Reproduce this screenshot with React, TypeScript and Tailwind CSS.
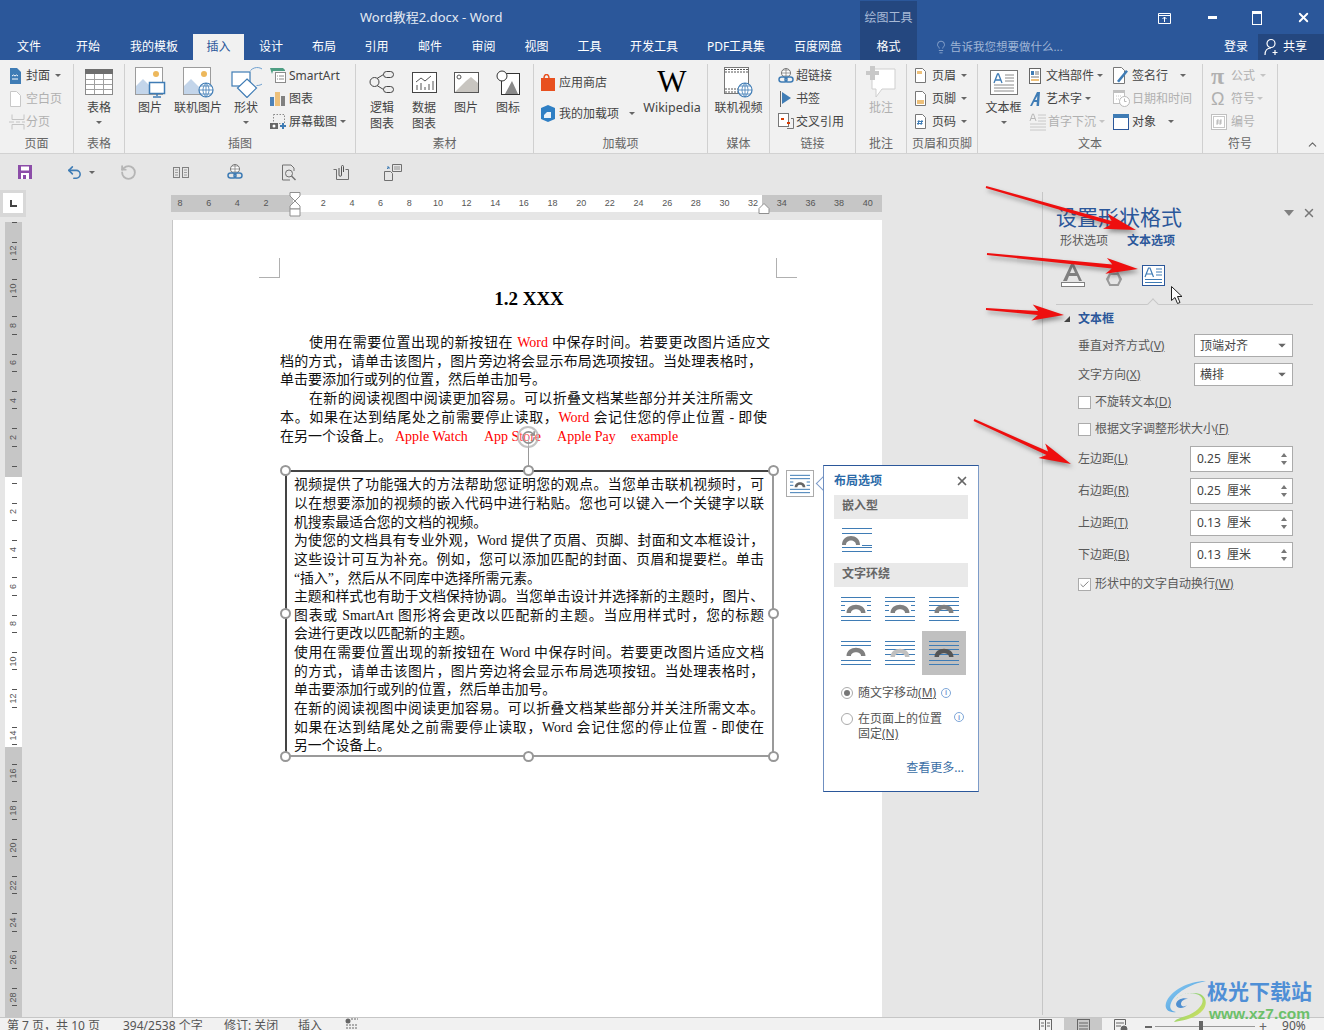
import { ReactNode } from 'react'
import { Lightbulb, RotateCw, Undo2, X, ChevronUp, Check } from 'lucide-react'

const Caret = ({ light = false }: { light?: boolean }) => (
  <span className={`inline-block h-0 w-0 border-x-[3px] border-t-[3px] border-x-transparent ${light ? 'border-t-[#c4c4c4]' : 'border-t-[#666666]'}`} />
)

// ribbon icons
const Ico = ({ w = 16, h = 16, children }: { w?: number; h?: number; children: ReactNode }) => (
  <svg width={w} height={h} viewBox={`0 0 ${w} ${h}`} fill="none" className="shrink-0">{children}</svg>
)
const CoverIcon = () => <Ico w={12} h={16}><path d="M1 0h7l4 4v12H1z" fill="#3f7cb5" /><path d="M3 8l1.5-1 1.5 1 1.5-1L9 8M3 11h6" stroke="#fff" /></Ico>
const BlankIcon = () => <Ico w={12} h={16}><path d="M1.5.5h6l4 4v11h-10z" fill="#fff" stroke="#c8c8c8" /></Ico>
const BreakIcon = () => <Ico w={16} h={16}><path d="M3 .5v5h12v-5M3 15.5v-5h12v5M0 8h5M7 8h4M13 8h3" stroke="#c4c4c4" /></Ico>
const TableIcon = () => <Ico w={28} h={26}><rect x=".5" y=".5" width="27" height="25" fill="#fff" stroke="#8a8a8a" /><rect width="28" height="5" fill="#6e6e6e" /><path d="M1 10.5h26M1 15.5h26M1 20.5h26M9.5 5v20M18.5 5v20" stroke="#a0a0a0" /></Ico>
const PicBase = () => <g><rect x=".5" y=".5" width="27" height="27" fill="#fff" stroke="#9c9c9c" /><circle cx="21" cy="7" r="3" fill="#edb85c" /><path d="M1 27V19l7-7 9 9 3 6z" fill="#c3d5ea" /></g>
const PictureIcon = () => <Ico w={31} h={31}><PicBase /><rect x="14.5" y="15.5" width="15" height="11" fill="#fff" stroke="#3f7cb5" strokeWidth="1.5" /><path d="M22 27v2M18 30h8" stroke="#3f7cb5" strokeWidth="1.5" /></Ico>
const OnlinePicIcon = () => <Ico w={31} h={31}><PicBase /><circle cx="23" cy="23" r="7" fill="#fff" stroke="#3f7cb5" strokeWidth="1.2" /><path d="M16 23h14M23 16v14M18 19h10M18 27h10M23 16c-4 4-4 10 0 14M23 16c4 4 4 10 0 14" stroke="#3f7cb5" strokeWidth=".8" /></Ico>
const ShapesIcon = () => <Ico w={31} h={31}><path d="M19.5 3.5a9 9 0 1 1 6 15" stroke="#6fa0cf" /><rect x="1" y="5" width="18" height="14" fill="#fff" stroke="#3f7cb5" strokeWidth="1.2" /><path d="M16 12l9.5 9-9.5 9.5L6.5 21z" fill="#fff" stroke="#3f7cb5" strokeWidth="1.2" /></Ico>
const SmartArtIcon = () => <Ico w={16} h={16}><path d="M0 0h13l2 2v1H3l-1 3z" fill="#4e9e83" /><rect x="5.5" y="4.5" width="10" height="10" fill="#fff" stroke="#8a8a8a" /><path d="M7 8h1M9 8h5M7 11h1M9 11h5" stroke="#8a8a8a" /></Ico>
const BarsIcon = () => <Ico w={15} h={15}><rect y="6" width="4" height="9" fill="#4d82b8" /><rect x="5" y="1" width="5" height="14" fill="#edc07a" /><rect x="11" y="5" width="4" height="10" fill="#808080" /></Ico>
const ShotIcon = () => <Ico w={17} h={16}><rect x="3.5" y=".5" width="11" height="9" stroke="#8a8a8a" strokeDasharray="1.5 1.5" /><rect y="9" width="8" height="6" fill="#666" /><circle cx="4" cy="12" r="1.5" fill="#fff" /><path d="M13 9v6M10 12h6" stroke="#3f7cb5" strokeWidth="2" /></Ico>
const LogicIcon = () => <Ico w={26} h={26}><circle cx="5.5" cy="13" r="4.5" stroke="#444" /><rect x="14.5" y="2.5" width="10" height="6" rx="3" stroke="#444" fill="#eee" /><rect x="14.5" y="17.5" width="10" height="6" rx="3" stroke="#444" fill="#eee" /><path d="M8 9.5L14.5 5.5M8 16.5l6.5 4" stroke="#444" /></Ico>
const DataIcon = () => <Ico w={25} h={21}><rect x=".5" y=".5" width="24" height="20" fill="#fff" stroke="#444" /><path d="M5 18v-5M9 18v-7M13 18v-3M17 18v-6M21 18V9M4 10l5-4 4 3 6-5" stroke="#555" /></Ico>
const Pic2Icon = () => <Ico w={25} h={21}><rect x=".5" y=".5" width="24" height="20" fill="#fff" stroke="#555" /><path d="M1 20l11-11 5-4 7 6v9z" fill="#c8c5c0" /><circle cx="5" cy="5" r="2" fill="#fff" stroke="#555" /></Ico>
const GlyphIcon = () => <Ico w={24} h={25}><rect x="5.5" y="3.5" width="18" height="21" fill="#fff" stroke="#333" /><circle cx="6" cy="6" r="5" fill="#fff" stroke="#333" /><path d="M9 24l7-13 6 13z" fill="#8a8a8a" /></Ico>
const StoreIcon = () => <Ico w={14} h={17}><path d="M0 4h14v13H0z" fill="#e8501f" /><path d="M3 5c0-6 5-6 5 0" stroke="#e8501f" strokeWidth="1.5" /></Ico>
const AddinIcon = () => <Ico w={14} h={17}><path d="M7 0l7 3v11l-7 3-7-3V3z" fill="#2f7fc4" /><path d="M6 7h4v6H3v-3z" fill="#fff" opacity=".9" /></Ico>
const VideoIcon = () => <Ico w={30} h={31}><rect x=".5" y=".5" width="24" height="26" fill="#fff" stroke="#777" /><path d="M1 2.5h23M1 5h23M1 22h23M1 25h23" stroke="#555" strokeDasharray="2 1" /><circle cx="21" cy="23" r="7" fill="#fff" stroke="#3f7cb5" strokeWidth="1.2" /><path d="M14 23h14M21 16v14M21 16c-4 4-4 10 0 14M21 16c4 4 4 10 0 14M16 19h10M16 27h10" stroke="#3f7cb5" strokeWidth=".8" /></Ico>
const LinkIcon = ({ s = 16 }: { s?: number }) => <svg width={s} height={s} viewBox="0 0 16 16" fill="none" className="shrink-0"><circle cx="8" cy="5" r="4.5" fill="#fff" stroke="#777" /><path d="M3.5 5h9M8 .5v9M5 2h6M5 8h6" stroke="#777" strokeWidth=".7" /><rect x="1" y="9" width="8" height="5" rx="2.5" fill="none" stroke="#3f7cb5" strokeWidth="1.5" /><rect x="7" y="9" width="8" height="5" rx="2.5" fill="none" stroke="#3f7cb5" strokeWidth="1.5" /></svg>
const FlagIcon = () => <Ico w={14} h={16}><path d="M2.5 0v16" stroke="#666" /><path d="M4 1l9 6-9 6z" fill="#3f7cb5" /></Ico>
const CrossIcon = () => <Ico w={16} h={17}><rect x=".5" y=".5" width="10" height="13" fill="#fff" stroke="#777" /><path d="M9 15.5h6.5v-10H13" stroke="#777" /><rect x="9" y="9" width="3" height="2" fill="#d83b01" /><rect x="3" y="5" width="3" height="2" fill="#d83b01" /></Ico>
const CommentIcon = () => <Ico w={30} h={36}><path d="M6 5h23v20H16l-6 8v-8H6z" fill="#fff" stroke="#cfcfcf" /><path d="M4 2h5v5h4v4H9v5H4v-5H0V7h4z" fill="#c9c9c9" /></Ico>
const PageDoc = ({ kind }: { kind: 'top' | 'bottom' | 'num' }) => (
  <Ico w={11} h={15}>
    <path d="M.5.5h7l3 3v11H.5z" fill="#fff" stroke="#777" />
    {kind === 'top' && <rect x="2" y="3" width="5" height="3" fill="#edc07a" />}
    {kind === 'bottom' && <rect x="2" y="9" width="7" height="4" fill="#edc07a" />}
    {kind === 'num' && <path d="M4 6l-1 5M7 6l-1 5M2.5 7.5h5.5M2 9.5h5.5" stroke="#3f7cb5" />}
  </Ico>
)
const TextBoxIcon = () => <Ico w={28} h={25}><rect x=".5" y=".5" width="27" height="24" fill="#fff" stroke="#777" /><path d="M15 5h9M15 8h9M15 11h9M4 15h20M4 18h20M4 21h20" stroke="#8a8a8a" /><path d="M4 13L7.5 4h1L12 13M5.5 10h5" stroke="#3f7cb5" strokeWidth="1.3" /></Ico>
const PartsIcon = () => <Ico w={12} h={16}><rect x=".5" y=".5" width="11" height="15" fill="#fff" stroke="#666" /><rect x="2" y="3" width="3" height="4" fill="#3f7cb5" /><path d="M6 4h4M6 6h4M2 9h8" stroke="#777" /><rect x="2" y="11" width="8" height="2" fill="#edc07a" /></Ico>
const WordArtIcon = () => <Ico w={12} h={16}><path d="M1 15L8 1h3l-1 14H7.5l.3-4H5l-2 4zM6 9h2l.3-4z" fill="#3f7cb5" /></Ico>
const DropCapIcon = () => <Ico w={18} h={18}><path d="M1 8l2.5-7h1L7 8M2 5.5h4" stroke="#b8b8b8" /><path d="M9 2h8M9 5h8M9 8h8M1 11h16M1 14h16M1 17h16" stroke="#c8c8c8" /></Ico>
const SignIcon = () => <Ico w={16} h={17}><path d="M.5.5h8l3 3v13H.5z" fill="#fff" stroke="#777" /><path d="M4 14l9-11 2 1.5L6 15.5z" fill="#3f7cb5" /></Ico>
const DateIcon = () => <Ico w={17} h={17}><rect x=".5" y=".5" width="11" height="13" fill="#fff" stroke="#c0c0c0" /><rect width="12" height="3" fill="#c0c0c0" /><path d="M3 6h6M3 9h6" stroke="#c8c8c8" strokeDasharray="1 1" /><circle cx="11.5" cy="11.5" r="5" fill="#fff" stroke="#b8b8b8" /><path d="M11.5 8.5v3h2" stroke="#b8b8b8" /></Ico>
const ObjectIcon = () => <Ico w={16} h={16}><rect x=".5" y=".5" width="15" height="15" fill="#fff" stroke="#2b579a" /><rect width="16" height="4" fill="#3f7cb5" /></Ico>
const NumIcon = () => <Ico w={16} h={16}><rect x=".5" y=".5" width="15" height="15" fill="#fff" stroke="#c0c0c0" /><rect x="2.5" y="2.5" width="11" height="11" stroke="#c8c8c8" /><path d="M7 5l-1 6M10 5l-1 6M5 7h6M5 9h6" stroke="#b0b0b0" strokeWidth=".8" /></Ico>

const SmallBtn = ({ icon, label, caret, off, gapLeft = 'w-[17px]', caretGap = 'ml-[5px]' }: { icon: ReactNode; label: string; caret?: boolean; off?: boolean; gapLeft?: string; caretGap?: string }) => (
  <div className={`flex h-[23px] items-center whitespace-nowrap text-[12px] ${off ? 'text-[#b0b0b0]' : 'text-[#444444]'}`}>
    <span className={`${gapLeft} flex items-center`}>{icon}</span>
    <span>{label}</span>
    {caret && <span className={`${caretGap} flex`}><Caret light={off} /></span>}
  </div>
)

const BigBtn = ({ icon, lines, caret, w, off }: { icon: ReactNode; lines: string[]; caret?: boolean; w: string; off?: boolean }) => (
  <div className={`flex flex-col items-center whitespace-nowrap text-[12px] leading-[16px] ${w} ${off ? 'text-[#b0b0b0]' : 'text-[#444444]'}`}>
    <div className="flex h-[36px] items-center justify-center">{icon}</div>
    {lines.map((l) => <div key={l}>{l}</div>)}
    {caret && <div className="mt-[5px] flex"><Caret /></div>}
  </div>
)

const Group = ({ label, w, pad = '', children }: { label: string; w: string; pad?: string; children: ReactNode }) => (
  <div className={`flex ${w} shrink-0 flex-col border-r border-[#d0d0d0]`}>
    <div className={`flex h-[72px] ${pad}`}>{children}</div>
    <div className="text-center text-[12px] leading-[16px] text-[#666666]">{label}</div>
  </div>
)

const TABS: [string, string][] = [
  ['文件', 'w-[58px]'], ['开始', 'w-[60px]'], ['我的模板', 'w-[72px]'],
]
const TABS2: [string, string][] = [
  ['设计', 'w-[54px]'], ['布局', 'w-[52px]'], ['引用', 'w-[53px]'], ['邮件', 'w-[54px]'], ['审阅', 'w-[53px]'],
  ['视图', 'w-[53px]'], ['工具', 'w-[53px]'], ['开发工具', 'w-[76px]'], ['PDF工具集', 'w-[88px]'], ['百度网盘', 'w-[76px]'],
]

function TopBar() {
  return (
    <div className="h-[60px] shrink-0 bg-[#2b579a] text-white">
      <div className="flex h-[34px]">
        <div className="w-[860px] pl-[360px] pt-[8px] text-[13px] leading-[18px] text-[#e4eaf3]">Word教程2.docx - Word</div>
        <div className="mt-px w-[57px] bg-[#24477f] pt-[8px] text-center text-[12px] leading-[18px] text-[#a7b9d6]">绘图工具</div>
        <div className="flex flex-1 items-center pl-[241px] pt-[1px]">
          <svg width="14" height="14" viewBox="0 0 14 14" fill="none" stroke="#fff"><path d="M.5 2.5h12v10H.5zM.5 4.5h12" /><path d="M6.5 11V6M4.5 8l2-2 2 2" /></svg>
          <div className="ml-[36px] h-[3px] w-[9px] bg-white" />
          <div className="ml-[35px] h-[14px] w-[10px] border border-t-[3px] border-white" />
          <X size={15} strokeWidth={3} className="ml-[34px]" />
        </div>
      </div>
      <div className="flex h-[26px] text-[12px] leading-[26px]">
        {TABS.map(([t, w]) => <div key={t} className={`${w} text-center`}>{t}</div>)}
        <div className="ml-[3px] w-[51px] bg-[#f1f1f1] text-center text-[#2b579a]">插入</div>
        {TABS2.map(([t, w]) => <div key={t} className={`${w} text-center`}>{t}</div>)}
        <div className="ml-[4px] w-[57px] bg-[#24477f] text-center">格式</div>
        <div className="ml-[17px] flex items-center text-[#9fb5d6]">
          <Lightbulb size={14} strokeWidth={1.3} />
          <span className="ml-[2px] text-[11.5px]">告诉我您想要做什么...</span>
        </div>
        <div className="ml-auto mr-[10px]">登录</div>
        <div className="flex w-[66px] items-center bg-[#24477f] pl-[6px]">
          <svg width="16" height="18" viewBox="0 0 16 18" fill="none" stroke="#fff" strokeWidth="1.2"><circle cx="7" cy="5.5" r="4" /><path d="M1 17c0-5 3-7 6-7M11 12v5M8.5 14.5h5" /></svg>
          <span className="ml-[3px]">共享</span>
        </div>
      </div>
    </div>
  )
}

function Ribbon() {
  return (
    <div className="relative flex h-[94px] shrink-0 border-b border-[#d2d2d2] bg-[#f1f1f1] pt-[4px]">
      <Group label="页面" w="w-[74px]" pad="flex-col pl-[9px]">
        <SmallBtn icon={<CoverIcon />} label="封面" caret />
        <SmallBtn icon={<BlankIcon />} label="空白页" off />
        <SmallBtn icon={<BreakIcon />} label="分页" off />
      </Group>
      <Group label="表格" w="w-[51px]" pad="justify-center">
        <BigBtn icon={<TableIcon />} lines={['表格']} caret w="w-[50px]" />
      </Group>
      <Group label="插图" w="w-[231px]" pad="pl-[1px]">
        <BigBtn icon={<PictureIcon />} lines={['图片']} w="w-[48px]" />
        <BigBtn icon={<OnlinePicIcon />} lines={['联机图片']} w="w-[48px]" />
        <BigBtn icon={<ShapesIcon />} lines={['形状']} caret w="w-[48px]" />
        <div className="flex flex-col">
          <SmallBtn icon={<SmartArtIcon />} label="SmartArt" gapLeft="w-[19px]" />
          <SmallBtn icon={<BarsIcon />} label="图表" gapLeft="w-[19px]" />
          <SmallBtn icon={<ShotIcon />} label="屏幕截图" caret gapLeft="w-[19px]" caretGap="ml-[3px]" />
        </div>
      </Group>
      <Group label="素材" w="w-[178px]" pad="pl-[5px]">
        <BigBtn icon={<LogicIcon />} lines={['逻辑', '图表']} w="w-[42px]" />
        <BigBtn icon={<DataIcon />} lines={['数据', '图表']} w="w-[42px]" />
        <BigBtn icon={<Pic2Icon />} lines={['图片']} w="w-[42px]" />
        <BigBtn icon={<GlyphIcon />} lines={['图标']} w="w-[42px]" />
      </Group>
      <Group label="加载项" w="w-[174px]" pad="pl-[7px]">
        <div className="flex w-[101px] flex-col pt-[3px]">
          <div className="flex h-[31px] items-center text-[12px] text-[#444444]"><span className="w-[18px]"><StoreIcon /></span>应用商店</div>
          <div className="flex h-[31px] items-center text-[12px] text-[#444444]"><span className="w-[18px]"><AddinIcon /></span>我的加载项<span className="ml-[10px] flex"><Caret /></span></div>
        </div>
        <div className="flex w-[60px] flex-col items-center text-[12.5px] leading-[16px] text-[#444444]">
          <div className="flex h-[36px] items-center font-['Liberation_Serif',serif] text-[31px] text-black">W</div>
          <div>Wikipedia</div>
        </div>
      </Group>
      <Group label="媒体" w="w-[62px]" pad="justify-center">
        <BigBtn icon={<VideoIcon />} lines={['联机视频']} w="w-[60px]" />
      </Group>
      <Group label="链接" w="w-[86px]" pad="flex-col pl-[8px]">
        <SmallBtn icon={<LinkIcon />} label="超链接" gapLeft="w-[18px]" />
        <SmallBtn icon={<FlagIcon />} label="书签" gapLeft="w-[18px]" />
        <SmallBtn icon={<CrossIcon />} label="交叉引用" gapLeft="w-[18px]" />
      </Group>
      <Group label="批注" w="w-[51px]" pad="justify-center">
        <BigBtn icon={<CommentIcon />} lines={['批注']} w="w-[50px]" off />
      </Group>
      <Group label="页眉和页脚" w="w-[71px]" pad="flex-col pl-[8px]">
        <SmallBtn icon={<PageDoc kind="top" />} label="页眉" caret />
        <SmallBtn icon={<PageDoc kind="bottom" />} label="页脚" caret />
        <SmallBtn icon={<PageDoc kind="num" />} label="页码" caret />
      </Group>
      <Group label="文本" w="w-[225px]" pad="pl-[6px]">
        <BigBtn icon={<TextBoxIcon />} lines={['文本框']} caret w="w-[39px]" />
        <div className="ml-[6px] flex w-[84px] flex-col">
          <SmallBtn icon={<PartsIcon />} label="文档部件" caret gapLeft="w-[17px]" caretGap="ml-[3px]" />
          <SmallBtn icon={<WordArtIcon />} label="艺术字" caret gapLeft="w-[17px]" caretGap="ml-[3px]" />
          <SmallBtn icon={<DropCapIcon />} label="首字下沉" caret off gapLeft="w-[19px]" caretGap="ml-[3px]" />
        </div>
        <div className="flex flex-col">
          <SmallBtn icon={<SignIcon />} label="签名行" caret gapLeft="w-[19px]" caretGap="ml-[12px]" />
          <SmallBtn icon={<DateIcon />} label="日期和时间" off gapLeft="w-[19px]" />
          <SmallBtn icon={<ObjectIcon />} label="对象" caret gapLeft="w-[19px]" caretGap="ml-[12px]" />
        </div>
      </Group>
      <Group label="符号" w="w-[75px]" pad="flex-col pl-[8px]">
        <SmallBtn icon={<span className="font-['Liberation_Serif',serif] text-[24px] font-bold leading-[20px] text-[#b0b0b0]">π</span>} label="公式" caret off gapLeft="w-[20px]" />
        <SmallBtn icon={<span className="font-['Liberation_Sans',sans-serif] text-[18px] leading-[20px] text-[#b0b0b0]">Ω</span>} label="符号" caret off gapLeft="w-[20px]" caretGap="ml-[2px]" />
        <SmallBtn icon={<NumIcon />} label="编号" off gapLeft="w-[20px]" />
      </Group>
      <ChevronUp size={13} strokeWidth={2} className="absolute bottom-[2px] right-[5px] text-[#666666]" />
    </div>
  )
}

function QuickBar() {
  return (
    <div className="flex h-[36px] shrink-0 items-center pl-[18px]">
      <svg width="14" height="14" viewBox="0 0 14 14"><path d="M0 0h14v14H0z" fill="#8c4da8" /><rect x="3" y="1.5" width="8" height="4" fill="#fff" /><rect x="3" y="8" width="8" height="6" fill="#fff" /><rect x="5" y="10" width="3" height="4" fill="#8c4da8" /></svg>
      <Undo2 size={17} strokeWidth={2.2} className="ml-[34px] text-[#3f7cb5]" />
      <span className="ml-[6px] flex"><Caret /></span>
      <RotateCw size={17} strokeWidth={2.6} className="ml-[25px] -scale-x-100 text-[#b5b5b5]" />
      <svg width="16" height="11" viewBox="0 0 16 11" fill="none" stroke="#808080" className="ml-[36px]"><rect x=".5" y=".5" width="6" height="10" /><rect x="9.5" y=".5" width="6" height="10" /><path d="M2 3h3M2 5.5h3M2 8h3M11 3h3M11 5.5h3M11 8h3" strokeWidth=".7" /></svg>
      <span className="ml-[38px]"><LinkIcon s={16} /></span>
      <svg width="16" height="17" viewBox="0 0 16 17" fill="none" stroke="#707070" className="ml-[38px]"><path d="M10 1H1.5v15H9M10 1l3 3v3" /><circle cx="8" cy="9.5" r="3.5" /><path d="M10.5 12l4 4" strokeWidth="1.5" /></svg>
      <svg width="16" height="15" viewBox="0 0 16 15" fill="none" stroke="#707070" className="ml-[36px]"><path d="M.5 4.5h3v10h12v-10h-3" /><path d="M6 3v7a1.2 1.2 0 0 0 2.5 0V1.5a1 1 0 0 1 2 0V7" stroke="#555" /></svg>
      <svg width="18" height="17" viewBox="0 0 18 17" fill="none" stroke="#707070" className="ml-[35px]"><path d="M8.5.5h9v7h-9zM.5 7.5h6l2 2v7h-8z" /><path d="M10 3h6M10 5h6" strokeWidth=".7" /><path d="M3 5l2-2M5 5V3H3" stroke="#3f7cb5" /></svg>
    </div>
  )
}

const H_LABELS = ['8', '6', '4', '2', '', '2', '4', '6', '8', '10', '12', '14', '16', '18', '20', '22', '24', '26', '28', '30', '32', '34', '36', '38', '40']
const V_LABELS = ['', '12', '10', '8', '6', '4', '2', '', '2', '4', '6', '8', '10', '12', '14', '16', '18', '20', '22', '24', '26', '28', '']

function HRuler() {
  return (
    <div className="relative h-[17px] w-[711px] bg-[linear-gradient(to_right,#c6c6c6_122px,#ffffff_122px,#ffffff_591px,#c6c6c6_591px)]">
      <div className="flex h-full w-[711px] overflow-hidden">
        <div className="flex -ml-[5.33px]">
          {H_LABELS.map((n, i) => (
            <div key={i} className="flex w-[28.67px] shrink-0 items-center justify-center font-['Liberation_Sans',sans-serif] text-[9px] text-[#555555]">{n}</div>
          ))}
        </div>
      </div>
      <svg width="14" height="26" viewBox="0 0 14 26" fill="#fff" stroke="#8f8f8f" className="absolute -top-[3px] left-[117px]"><path d="M2 .5h10V4L7 9 2 4z" /><path d="M7 9l5 5v3H2v-3z" /><path d="M2 17h10v7H2z" /></svg>
      <svg width="12" height="11" viewBox="0 0 12 11" fill="#fff" stroke="#8f8f8f" className="absolute left-[587px] top-[8px]"><path d="M1 10.5v-5l5-5 5 5v5z" /></svg>
    </div>
  )
}

function VRuler() {
  return (
    <div className="ml-[5px] mt-[5px] w-[17px] flex-1 overflow-hidden bg-[linear-gradient(to_bottom,#c6c6c6_255px,#ffffff_255px,#ffffff_525px,#c6c6c6_525px)]">
      <div className="-mt-[27.3px]">
        {V_LABELS.map((n, i) => (
          <div key={i} className="relative flex h-[37.33px] items-center justify-center">
            <div className="absolute left-[7px] top-[9.5px] h-px w-[5px] bg-[#555555]" />
            <div className="absolute bottom-[9.5px] left-[7px] h-px w-[5px] bg-[#555555]" />
            <span className="-rotate-90 font-['Liberation_Sans',sans-serif] text-[9px] leading-none text-[#555555]">{n}</span>
          </div>
        ))}
      </div>
    </div>
  )
}

const Red = ({ children, m = '' }: { children: ReactNode; m?: string }) => <span className={`text-[#ff0000] ${m}`}>{children}</span>
const JUST = 'whitespace-nowrap [text-align:justify] [text-align-last:justify]'

const BOX_LINES: [string, boolean][] = [
  ['视频提供了功能强大的方法帮助您证明您的观点。当您单击联机视频时，可', true],
  ['以在想要添加的视频的嵌入代码中进行粘贴。您也可以键入一个关键字以联', true],
  ['机搜索最适合您的文档的视频。', false],
  ['为使您的文档具有专业外观，Word 提供了页眉、页脚、封面和文本框设计，', true],
  ['这些设计可互为补充。例如，您可以添加匹配的封面、页眉和提要栏。单击', true],
  ['“插入”，然后从不同库中选择所需元素。', false],
  ['主题和样式也有助于文档保持协调。当您单击设计并选择新的主题时，图片、', true],
  ['图表或 SmartArt 图形将会更改以匹配新的主题。当应用样式时，您的标题', true],
  ['会进行更改以匹配新的主题。', false],
  ['使用在需要位置出现的新按钮在 Word 中保存时间。若要更改图片适应文档', true],
  ['的方式，请单击该图片，图片旁边将会显示布局选项按钮。当处理表格时，', true],
  ['单击要添加行或列的位置，然后单击加号。', false],
  ['在新的阅读视图中阅读更加容易。可以折叠文档某些部分并关注所需文本。', true],
  ['如果在达到结尾处之前需要停止读取，Word 会记住您的停止位置 - 即使在', true],
  ['另一个设备上。', false],
]

const Handle = ({ pos }: { pos: string }) => (
  <div className={`absolute h-[11px] w-[11px] rounded-full border-2 border-[#979797] bg-white ${pos}`} />
)

function Page() {
  return (
    <div className="relative ml-[1px] mt-[8px] flex-1 overflow-hidden border-l border-[#c6c6c6] bg-white pl-[107px] font-['Liberation_Serif','Noto_Sans_CJK_SC',serif] text-[14px] leading-[18.7px] text-[#111111]">
      <div className="absolute left-[86px] top-[38px] h-[20px] w-[21px] border-b border-r border-[#b0b0b0]" />
      <div className="absolute left-[603px] top-[38px] h-[20px] w-[21px] border-b border-l border-[#b0b0b0]" />
      <div className="mt-[68px] w-[498px] text-center text-[19px] font-bold leading-[22px] text-black">1.2 XXX</div>
      <div className="mt-[24px]">
        <div className={`ml-[29px] w-[461px] ${JUST}`}>使用在需要位置出现的新按钮在 <Red>Word</Red> 中保存时间。若要更改图片适应文</div>
        <div className={`w-[482px] ${JUST}`}>档的方式，请单击该图片，图片旁边将会显示布局选项按钮。当处理表格时，</div>
        <div>单击要添加行或列的位置，然后单击加号。</div>
        <div className={`ml-[29px] w-[444px] ${JUST}`}>在新的阅读视图中阅读更加容易。可以折叠文档某些部分并关注所需文</div>
        <div className={`w-[487px] ${JUST}`}>本。如果在达到结尾处之前需要停止读取，<Red>Word</Red> 会记住您的停止位置 - 即使</div>
        <div className="whitespace-nowrap">在另一个设备上。<Red m="ml-[3px]">Apple Watch</Red><Red m="ml-[16px]">App Store</Red><Red m="ml-[16px]">Apple Pay</Red><Red m="ml-[15px]">example</Red></div>
      </div>
      <div className="relative ml-[5px] mt-[24px] h-[287px] w-[489px] border-2 border-[#444444] border-b-[#9a9a9a] border-r-[#9a9a9a] pl-[7px] pt-[4px] text-[13.8px] leading-[18.65px]">
        {BOX_LINES.map(([l, j], i) => (
          <div key={i} className={j ? `w-[470px] ${JUST}` : 'whitespace-nowrap'}>{l}</div>
        ))}
        <div className="absolute -top-[36px] left-[241px] h-[34px] w-px bg-[#999999]" />
        <div className="absolute -top-[46px] left-[230px] flex h-[22px] w-[22px] items-center justify-center rounded-full border-2 border-[#a9a9a9]/70 bg-white/30">
          <RotateCw size={15} strokeWidth={2.5} className="text-[#8f8f8f]" />
        </div>
        <Handle pos="-left-[7px] -top-[7px]" />
        <Handle pos="left-[236px] -top-[7px]" />
        <Handle pos="-right-[7px] -top-[7px]" />
        <Handle pos="-left-[7px] top-[136px]" />
        <Handle pos="-right-[7px] top-[136px]" />
        <Handle pos="-bottom-[7px] -left-[7px]" />
        <Handle pos="-bottom-[7px] left-[236px]" />
        <Handle pos="-bottom-[7px] -right-[7px]" />
      </div>
    </div>
  )
}

// Accesskey letter is underlined like in the Office pane
const Key = ({ text, k }: { text: string; k: string }) => (
  <span>{text}<span className="underline">({k})</span></span>
)
const SelectBox = ({ value }: { value: string }) => (
  <div className="flex h-[23px] w-[99px] items-center justify-between border border-[#ababab] bg-white pl-[5px] pr-[7px] text-[12px] text-[#444444]">
    {value}<span className="flex scale-125"><Caret /></span>
  </div>
)
const Spinner = ({ value }: { value: string }) => (
  <div className="flex h-[26px] w-[103px] items-center justify-between border border-[#ababab] bg-white pl-[6px] pr-[5px] text-[12px] text-[#444444]">
    <span className="whitespace-pre">{value}  厘米</span>
    <span className="flex flex-col gap-[4px]">
      <span className="h-0 w-0 border-x-[3.5px] border-b-[4px] border-x-transparent border-b-[#777777]" />
      <span className="h-0 w-0 border-x-[3.5px] border-t-[4px] border-x-transparent border-t-[#777777]" />
    </span>
  </div>
)
const SpinRow = ({ text, k, value }: { text: string; k: string; value: string }) => (
  <div className="mb-[6px] flex h-[26px] items-center justify-between text-[12px] text-[#595959]">
    <Key text={text} k={k} />
    <Spinner value={value} />
  </div>
)
const CheckRow = ({ text, k, on, cls }: { text: string; k: string; on?: boolean; cls: string }) => (
  <div className={`flex items-center text-[12px] text-[#595959] ${cls}`}>
    <span className="mr-[4px] flex h-[13px] w-[13px] items-center justify-center border border-[#ababab] bg-white">
      {on && <Check size={11} strokeWidth={2} className="text-[#777777]" />}
    </span>
    <Key text={text} k={k} />
  </div>
)

function FormatPane() {
  return (
    <div className="relative mb-[2px] mt-[2px] w-[282px] border-l border-[#c6c6c6] pl-[13px]">
      <div className="absolute right-[8px] top-[14px] flex items-center gap-[8px] text-[#777777]">
        <span className="h-0 w-0 border-x-[5px] border-t-[6px] border-x-transparent border-t-[#808080]" />
        <X size={14} strokeWidth={2.5} />
      </div>
      <div className="mt-[10px] text-[21px] leading-[30px] text-[#2b579a]">设置形状格式</div>
      <div className="mt-[1px] flex pl-[4px] text-[12px] leading-[16px]">
        <span className="w-[67px] text-[#595959]">形状选项</span>
        <span className="font-bold text-[#2b579a]">文本选项</span>
      </div>
      <div className="mt-[14px] flex h-[24px] items-center pl-[5px]">
        <svg width="24" height="24" viewBox="0 0 24 24" fill="none" className="shrink-0"><path d="M2 18L10 1h3l8 17h-3l-2-5H8l-2 5zM9 10h5l-2.5-6z" fill="#808080" /><rect x=".5" y="19.5" width="23" height="4" fill="#fff" stroke="#808080" /></svg>
        <svg width="18" height="24" viewBox="0 0 18 24" fill="none" className="ml-[20px] shrink-0"><path d="M3 17L8 2h2l5 15" stroke="#b0b0b0" strokeWidth="2" /><path d="M5 11h8l3 5-3 6H5l-3-6z" stroke="#9a9a9a" strokeWidth="2" /></svg>
        <svg width="23" height="21" viewBox="0 0 23 21" fill="none" className="ml-[19px] shrink-0"><rect x=".5" y=".5" width="22" height="20" fill="#fff" stroke="#2b579a" /><path d="M3 12L6.5 3H8l3.5 9M4.5 9H10" stroke="#3f7cb5" strokeWidth="1.2" /><path d="M14 4h6M14 7h6M14 10h6M3 14.5h17M3 17.5h17" stroke="#3f7cb5" /></svg>
      </div>
      <div className="relative mt-[17px] h-px w-[257px] bg-[#c8c8c8]">
        <div className="absolute -top-[4px] left-[93px] h-[8px] w-[8px] rotate-45 border-l border-t border-[#c8c8c8] bg-[#e6e6e6]" />
      </div>
      <div className="mt-[6px] flex h-[16px] items-center pl-[8px]">
        <span className="h-0 w-0 border-b-[6px] border-l-[6px] border-b-[#444444] border-l-transparent" />
        <span className="ml-[8px] text-[12px] font-bold text-[#2b579a]">文本框</span>
      </div>
      <div className="ml-[22px] mt-[7px] w-[215px]">
        <div className="mb-[6px] flex h-[23px] items-center justify-between text-[12px] text-[#595959]"><Key text="垂直对齐方式" k="V" /><SelectBox value="顶端对齐" /></div>
        <div className="flex h-[23px] items-center justify-between text-[12px] text-[#595959]"><Key text="文字方向" k="X" /><SelectBox value="横排" /></div>
        <CheckRow text="不旋转文本" k="D" cls="mt-[8px] h-[16px]" />
        <CheckRow text="根据文字调整形状大小" k="F" cls="mt-[11px] h-[16px]" />
        <div className="mt-[9px]">
          <SpinRow text="左边距" k="L" value="0.25" />
          <SpinRow text="右边距" k="R" value="0.25" />
          <SpinRow text="上边距" k="T" value="0.13" />
          <SpinRow text="下边距" k="B" value="0.13" />
        </div>
        <CheckRow text="形状中的文字自动换行" k="W" on cls="mt-[8px] h-[16px]" />
      </div>
    </div>
  )
}

const WrapIcon = ({ rows, archY = 8, light, dark, clear }: { rows: number[]; archY?: number; light?: boolean; dark?: boolean; clear?: boolean }) => (
  <svg width="30" height="26" viewBox="0 0 30 26" fill="none" className="shrink-0">
    {rows.map((y) => <path key={y} d={`M0 ${y}h30`} stroke="#3f7cb5" />)}
    {clear && <rect x="4" y={archY} width="22" height="10" fill="#fff" />}
    <path d={`M5.5 ${archY + 9}c0-11 19-11 19 0h-4.5c0-5-10-5-10 0z`} fill={light ? '#c0c0c0' : dark ? '#555555' : '#808080'} />
  </svg>
)
const FULL = [1.5, 5.5, 20.5, 24.5]
const THRU = [1.5, 5.5, 9.5, 14.5, 20.5, 24.5]

function LayoutPopup() {
  return (
    <>
      <div className="absolute left-[786px] top-[470px] flex h-[27px] w-[28px] items-center justify-center border border-[#ababab] bg-white">
        <svg width="20" height="20" viewBox="0 0 30 30" fill="none"><path d="M0 2h30M0 7h30M0 12h5M25 12h5M0 17h5M25 17h5M0 23h30M0 28h30" stroke="#3f7cb5" strokeWidth="1.5" /><path d="M7 20c0-10 16-10 16 0h-4c0-5-8-5-8 0z" fill="#666" /></svg>
      </div>
      <div className="absolute left-[818px] top-[478px] h-[11px] w-[11px] rotate-45 border-b border-l border-[#7d9bc8] bg-white" />
      <div className="absolute left-[823px] top-[465px] flex h-[327px] w-[156px] flex-col border border-[#2b579a] border-l-[#6f8fc0] border-r-[#7d9bc8] bg-white pl-[10px] pr-[10px] text-[12px] text-[#555555]">
        <div className="mt-[6px] flex h-[18px] items-center justify-between">
          <span className="font-bold text-[#2b6aa8]">布局选项</span>
          <X size={14} strokeWidth={3} className="-mr-[1px] text-[#666666]" />
        </div>
        <div className="mt-[5px] h-[24px] bg-[#e9e9e9] pl-[8px] font-bold leading-[22px] text-[#666666]">嵌入型</div>
        <div className="mt-[8px] pl-[8px]">
          <svg width="30" height="26" viewBox="0 0 30 26" fill="none"><path d="M0 1.5h30M0 6.5h30M20 18.5h10M0 24.5h30M0 20.5h30" stroke="#3f7cb5" /><path d="M0 18c0-12 18-12 18 0h-4c0-6-10-6-10 0z" fill="#808080" /></svg>
        </div>
        <div className="mt-[10px] h-[24px] bg-[#e9e9e9] pl-[8px] font-bold leading-[22px] text-[#666666]">文字环绕</div>
        <div className="grid grid-cols-[44px_44px_44px]">
          <div className="flex h-[44px] items-center justify-center"><WrapIcon rows={THRU} clear /></div>
          <div className="flex h-[44px] items-center justify-center"><WrapIcon rows={THRU} clear /></div>
          <div className="flex h-[44px] items-center justify-center"><WrapIcon rows={THRU} /></div>
          <div className="flex h-[44px] items-center justify-center"><WrapIcon rows={FULL} archY={7} /></div>
          <div className="flex h-[44px] items-center justify-center"><WrapIcon rows={THRU} light /></div>
          <div className="flex h-[44px] items-center justify-center bg-[#c0c0c0]"><WrapIcon rows={THRU} dark /></div>
        </div>
        <div className="mt-[9px] flex items-center pl-[7px] leading-[17px]">
          <span className="flex h-[12px] w-[12px] items-center justify-center rounded-full border border-[#ababab]"><span className="h-[6px] w-[6px] rounded-full bg-[#777777]" /></span>
          <span className="ml-[5px] whitespace-nowrap"><Key text="随文字移动" k="M" /></span>
          <span className="ml-[5px] flex h-[10px] w-[10px] items-center justify-center rounded-full border border-[#7ea6d8] text-[7px] font-bold leading-none text-[#7ea6d8]">i</span>
        </div>
        <div className="mt-[10px] flex items-start pl-[7px] leading-[15px]">
          <span className="mt-[2px] h-[12px] w-[12px] shrink-0 rounded-full border border-[#ababab]" />
          <span className="ml-[5px] w-[96px]">在页面上的位置 固定<span className="underline">(N)</span></span>
          <span className="mt-[1px] flex h-[10px] w-[10px] shrink-0 items-center justify-center rounded-full border border-[#7ea6d8] text-[7px] font-bold leading-none text-[#7ea6d8]">i</span>
        </div>
        <div className="mt-[18px] pr-[4px] text-right text-[#3a6ea5]">查看更多...</div>
      </div>
    </>
  )
}

function Arrow({ x1, y1, x2, y2 }: { x1: number; y1: number; x2: number; y2: number }) {
  const len = Math.hypot(x2 - x1, y2 - y1)
  const ux = (x2 - x1) / len
  const uy = (y2 - y1) / len
  const nx = -uy
  const ny = ux
  const at = (along: number, side: number) => `${x1 + ux * along + nx * side},${y1 + uy * along + ny * side}`
  const head = len - 26
  const pts = [at(0, -1), at(head, -2), at(head - 6, -8), at(len, 0), at(head - 6, 8), at(head, 2), at(0, 1)].join(' ')
  return <polygon points={pts} fill="#ee0f0f" className="drop-shadow-[2px_3px_2px_rgba(60,60,60,0.5)]" />
}

function Overlays() {
  return (
    <>
      <svg width="1324" height="1030" viewBox="0 0 1324 1030" className="pointer-events-none absolute left-0 top-0">
        <Arrow x1={986} y1={187} x2={1136} y2={230} />
        <Arrow x1={987} y1={254} x2={1138} y2={269} />
        <Arrow x1={986} y1={309} x2={1064} y2={315} />
        <Arrow x1={974} y1={420} x2={1071} y2={464} />
        <path d="M1171.5 286.5v14l3.5-3 2.5 6 2.5-1-2.5-6h4.5z" fill="#fff" stroke="#222" />
      </svg>
      <svg width="46" height="44" viewBox="0 0 46 44" fill="none" className="absolute left-[1164px] top-[979px]">
        <defs>
          <linearGradient id="wm1" x1="0" y1="0" x2="1" y2="1"><stop offset="0" stopColor="#8fd0f5" /><stop offset="1" stopColor="#3c8fd6" /></linearGradient>
          <linearGradient id="wm2" x1="0" y1="0" x2="1" y2="1"><stop offset="0" stopColor="#5fc77c" /><stop offset="1" stopColor="#e8e65a" /></linearGradient>
        </defs>
        <path d="M42 2C24 2 6 12 2 24c-2 7 4 10 10 9-5-1-7-4-5-9C11 14 26 5 42 2z" fill="url(#wm1)" />
        <path d="M12 20c6-7 22-8 26-1 3 6-5 14-16 18-6 2-10 3-12 6 6-1 22-3 29-12 6-8 2-17-9-17-8 0-15 2-18 6z" fill="url(#wm2)" />
        <path d="M12 25c1-5 8-7 12-5-4 0-7 2-7 5s4 3 6 1c-3 4-11 4-11-1z" fill="#4f8fd0" />
      </svg>
      <div className="absolute left-[1207px] top-[977px] whitespace-nowrap text-[21px] font-bold leading-[28px] text-[#4f8fd6]">极光下载站</div>
      <div className="absolute left-[1209px] top-[1005px] whitespace-nowrap font-['Liberation_Sans',sans-serif] text-[15.5px] font-bold leading-[18px] text-[#6cc06a]">www.xz7.com</div>
    </>
  )
}

function StatusBar() {
  return (
    <div className="flex h-[13px] shrink-0 items-start overflow-hidden border-t border-[#c6c6c6] bg-[#f1f1f1] pl-[7px] text-[12px] leading-[16px] text-[#555555]">
      <span className="w-[116px] whitespace-nowrap">第 7 页，共 10 页</span>
      <span className="w-[101px] whitespace-nowrap">394/2538 个字</span>
      <span className="w-[74px] whitespace-nowrap">修订: 关闭</span>
      <span className="w-[47px]">插入</span>
      <svg width="13" height="12" viewBox="0 0 13 12" fill="none"><circle cx="3" cy="3" r="2.5" fill="#666" /><path d="M6 1h7M1 7h12M1 10h12" stroke="#666" strokeDasharray="2 1" /></svg>
      <div className="ml-[681px] flex items-start">
        <svg width="13" height="13" viewBox="0 0 13 13" fill="none" stroke="#666" className="mt-[1px]"><rect x=".5" y=".5" width="12" height="14" /><path d="M6.5 0v13M2 4h3M8 4h3M2 7h3M8 7h3" /></svg>
        <div className="ml-[12px] flex h-[13px] w-[38px] justify-center bg-[#c8c8c8] pt-[1px]">
          <svg width="13" height="13" viewBox="0 0 13 13" fill="none" stroke="#666"><rect x=".5" y=".5" width="12" height="14" /><path d="M2 4h9M2 7h9M2 10h9" /></svg>
        </div>
        <svg width="15" height="13" viewBox="0 0 15 13" fill="none" stroke="#666" className="ml-[12px] mt-[1px]"><path d="M.5 13V.5h11V6M2 4h8M2 7h5" /><circle cx="10" cy="10" r="3" fill="#666" /></svg>
        <span className="ml-[16px] mt-[8px] h-[2px] w-[7px] bg-[#666666]" />
        <div className="relative ml-[3px] mt-[8px] h-px w-[100px] bg-[#999999]">
          <div className="absolute -top-[5px] left-[44px] h-[12px] w-[4px] bg-[#666666]" />
        </div>
        <span className="ml-[4px] mt-[3px] text-[14px] leading-[12px] text-[#666666]">+</span>
        <span className="ml-[15px]">90%</span>
      </div>
    </div>
  )
}

export default function App() {
  return (
    <div className="relative flex h-[1030px] w-[1324px] flex-col overflow-hidden bg-[#e6e6e6] font-['Noto_Sans','Noto_Sans_CJK_SC',sans-serif]">
      <TopBar />
      <Ribbon />
      <QuickBar />
      <div className="flex min-h-0 flex-1">
        <div className="flex w-[171px] shrink-0 flex-col">
          <div className="h-[27px] w-[26px] bg-[#d8d8d8] pl-[3px] pt-[3px]">
            <div className="flex h-[20px] w-[20px] items-center justify-center bg-white">
              <div className="h-[7px] w-[7px] border-b-2 border-l-2 border-[#444444]" />
            </div>
          </div>
          <VRuler />
        </div>
        <div className="flex w-[711px] shrink-0 flex-col pt-[5px]">
          <HRuler />
          <Page />
        </div>
        <div className="w-[160px] shrink-0" />
        <FormatPane />
      </div>
      <StatusBar />
      <LayoutPopup />
      <Overlays />
    </div>
  )
}
